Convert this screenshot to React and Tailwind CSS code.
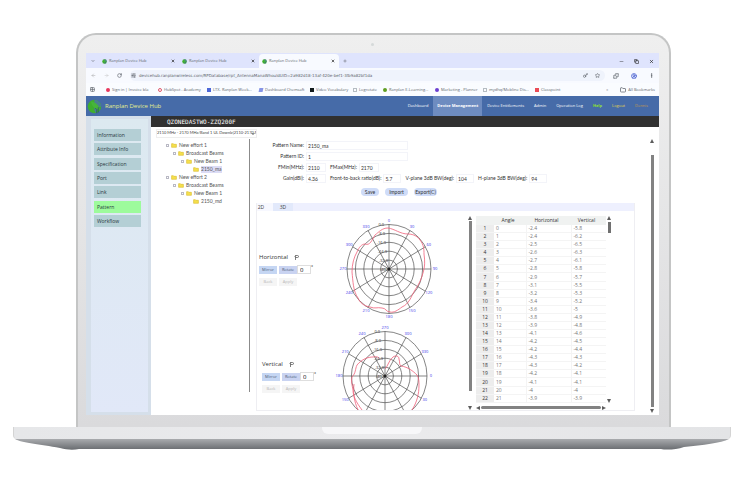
import React from 'react';
import {
    ArrowLeft, ArrowRight, ChevronDown, CircleUserRound, Copy, EllipsisVertical, Folder, Grid2X2,
    Key, Minus, Plus, Puzzle, RotateCw, SlidersHorizontal, Star, X,
} from 'lucide-react';

const tabs = [false, false, true];

const bookmarks = [
    { label: 'Sign in | Invoice bla', width: 'w-[52px]', icon: 'rounded-full border-[#e8365d] border-2' },
    { label: 'HubSpot - Academy', width: 'w-[49px]', icon: 'rounded-full border-[#e0566a] border' },
    { label: 'LTX- Ranplan Week...', width: 'w-[52px]', icon: 'bg-[#4d68d8]' },
    { label: 'Dashboard Chemsaft', width: 'w-[51px]', icon: 'bg-[#8795e6] -skew-x-12' },
    { label: 'Video Vocabulary', width: 'w-[43px]', icon: 'bg-[#111a1c]' },
    { label: 'Logrotate', width: 'w-[30px]', icon: 'border border-[#b5bcc2]' },
    { label: 'Ranplan E-Learning...', width: 'w-[52px]', icon: 'rounded-full bg-[#5f9e21]' },
    { label: 'Marketing - Planner', width: 'w-[48px]', icon: 'rounded-full bg-[#6b3fd0]' },
    { label: 'mydhq/Mobline Dis...', width: 'w-[52px]', icon: 'border border-[#b5bcc2]' },
    { label: 'Classpoint', width: 'w-[34px]', icon: 'bg-[#ea4b56]' },
];

const sections = ['Information', 'Attribute Info', 'Specification', 'Port', 'Link', 'Pattern', 'Workflow'];

const tree = [
    { label: 'New effort 1', indent: 'pl-[15px]' },
    { label: 'Broadcast Beams', indent: 'pl-[22px]' },
    { label: 'New Beam 1', indent: 'pl-[30px]' },
    { label: '2150_ma', indent: 'pl-[42px]', leaf: true, selected: true },
    { label: 'New effort 2', indent: 'pl-[15px]' },
    { label: 'Broadcast Beams', indent: 'pl-[22px]' },
    { label: 'New Beam 1', indent: 'pl-[30px]' },
    { label: '2150_md', indent: 'pl-[42px]', leaf: true },
];

const rows = [
    ['-2.4', '-5.8'], ['-2.4', '-6.2'], ['-2.5', '-6.5'], ['-2.6', '-6.3'], ['-2.7', '-6.1'], ['-2.8', '-5.8'],
    ['-2.9', '-5.7'], ['-3.1', '-5.5'], ['-3.2', '-5.3'], ['-3.4', '-5.2'], ['-3.6', '-5'], ['-3.8', '-4.9'],
    ['-3.9', '-4.8'], ['-4.1', '-4.6'], ['-4.2', '-4.5'], ['-4.2', '-4.4'], ['-4.3', '-4.3'], ['-4.3', '-4.2'],
    ['-4.2', '-4.1'], ['-4.1', '-4.1'], ['-4', '-4'], ['-3.9', '-3.9'],
];

const Favicon = ({ className }) => (
    <svg className={className} viewBox="0 0 20 20" aria-hidden="true">
        <circle cx="10" cy="10" r="9" fill="#3fae2e" />
        <path d="M10 1a9 9 0 0 1 9 9c-4 1-6 4-7 9C9 15 9 10 10 1z" fill="#4a7f90" />
        <path d="M5 3c6 1 11 5 12 11-3 1-7-1-9-4S6 6 5 3z" fill="#46b53a" />
        <path d="M11 12l2 2v5M15 11v7" stroke="#26506f" strokeWidth="1" fill="none" />
    </svg>
);

const Arrow = ({ className }) => (
    <svg className={className} width="4" height="4" viewBox="0 0 4 4" aria-hidden="true">
        <path d="M2 0L4 4H0z" fill="#5d5d5d" />
    </svg>
);

const BrowserChrome = () => (
    <div className="text-[4px] text-[#60656d]">
        {/* Tab strip */}
        <div className="flex h-[15px] items-end bg-[#dfe4fd]">
            <div className="flex h-[14px] w-[13px] items-center justify-center">
                <ChevronDown className="size-1" strokeWidth={4} />
            </div>
            {tabs.map((active, i) => (
                <div key={i} className={`flex h-[14px] w-20 items-center gap-px rounded-t pr-1 pl-[3px] ${active ? 'bg-[#f8faff]' : ''}`}>
                    <Favicon className="size-[5px]" />
                    <span className="flex-1 pl-px whitespace-nowrap">Ranplan Device Hub</span>
                    <button aria-label="Close tab"><X className="size-1 text-[#222]" strokeWidth={4} /></button>
                </div>
            ))}
            <button aria-label="New tab" className="flex h-[14px] w-[11px] items-center justify-center">
                <Plus className="size-1" strokeWidth={3} />
            </button>
            <div className="ml-auto flex h-[14px] items-center gap-[10px] pr-[5px] text-[#222]">
                <Minus className="size-[5px]" />
                <Copy className="size-[5px]" strokeWidth={3} />
                <X className="size-[5px]" strokeWidth={3} />
            </div>
        </div>

        {/* Address bar */}
        <div className="flex h-[15px] items-center gap-2 bg-[#f8faff] px-[5px]">
            <ArrowLeft className="size-[5px] text-[#999]" />
            <ArrowRight className="size-[5px] text-[#bbb]" />
            <RotateCw className="size-[5px]" strokeWidth={3} />
            <div className="flex h-[11px] flex-1 items-center gap-[3px] rounded-full bg-[#eff3fc] px-px">
                <SlidersHorizontal className="size-[5px]" strokeWidth={3} />
                <span className="flex-1 font-['DejaVu_Sans',sans-serif] whitespace-nowrap">
                    devicehub.ranplanwireless.com/RPDatabase/rpt_AntennaManaWhouldUID=2a982d18-13af-420e-bef1-3fb9a82bf1da
                </span>
                <Key className="mr-1 size-[5px]" strokeWidth={3} />
                <Star className="mr-1 size-[5px]" strokeWidth={3} />
            </div>
            <div className="flex items-center gap-3">
                <Puzzle className="size-[6px]" strokeWidth={3} />
                <CircleUserRound className="size-[6px] text-[#4c63d2]" strokeWidth={3} />
                <EllipsisVertical className="size-[5px]" strokeWidth={4} />
            </div>
        </div>

        {/* Bookmarks */}
        <div className="flex h-[13px] items-center bg-[#fafcff] pl-1">
            <Grid2X2 className="mr-[11px] size-[5px]" strokeWidth={3} />
            {bookmarks.map((b) => (
                <a key={b.label} href="#" className={`flex shrink-0 items-center gap-[2px] whitespace-nowrap ${b.width}`}>
                    <span className={`size-1 shrink-0 ${b.icon}`} />
                    {b.label}
                </a>
            ))}
            <span className="ml-auto pr-3">»</span>
            <a href="#" className="flex items-center gap-[2px] pr-1 whitespace-nowrap">
                <Folder className="size-[6px]" strokeWidth={3} />
                All Bookmarks
            </a>
        </div>
    </div>
);

const NavBar = () => (
    <nav className="flex h-5 items-stretch bg-[#466ba8] text-[4px] text-white">
        <div className="flex items-center gap-[3px] pl-px text-[6px] text-[#e3ef8c]">
            <Favicon className="size-[15px]" />
            <span className="whitespace-nowrap">Ranplan Device Hub</span>
        </div>
        <div className="ml-auto flex items-stretch pr-[11px] *:flex *:items-center *:whitespace-nowrap">
            <a href="#" className="px-[5px]">Dashboard</a>
            <a href="#" className="bg-[#6e8cc0] px-1 font-bold">Device Management</a>
            <a href="#" className="px-[5px]">Device Entitlements</a>
            <a href="#" className="px-[5px]">Admin</a>
            <a href="#" className="px-[5px]">Operation Log</a>
            <a href="#" className="px-[5px] font-bold text-[#8fe02f]">Help</a>
            <a href="#" className="px-[5px] text-[#e2d84a]">Logout</a>
            <a href="#" className="pl-[5px] text-[#c59a4a]">Dennis</a>
        </div>
    </nav>
);

const Tree = () => (
    <ul className="h-[253px] w-[99px] shrink-0 border-r border-[#8b8b8b] pt-[2px] font-['Lato',sans-serif] text-[5px] text-[#555]">
        {tree.map((node, i) => (
            <li key={i} className={`flex h-2 items-center gap-[2px] whitespace-nowrap ${node.indent}`}>
                {!node.leaf && <span className="size-[3px] border border-[#b9b9c4]" />}
                <svg className="h-[5px] w-[6px] shrink-0" viewBox="0 0 10 8" aria-hidden="true">
                    <path d="M1 1h3l1 1h4v5H1z" fill="#f5e04c" stroke="#d8bb2a" />
                </svg>
                <span className={node.selected ? 'bg-[#dcdcf5] leading-[7px]' : 'leading-[7px]'}>{node.label}</span>
            </li>
        ))}
    </ul>
);

const Field = ({ id, label, value, labelWidth = '', width }) => (
    <div className="flex items-center gap-[2px]">
        <label htmlFor={id} className={`text-right whitespace-nowrap ${labelWidth}`}>{label}</label>
        <input id={id} defaultValue={value} className={`h-[9px] border border-[#f3f4f9] px-px leading-[7px] ${width}`} />
    </div>
);

const PatternForm = () => (
    <div className="flex h-[64px] flex-col gap-[2px] pt-[2px] font-['Lato',sans-serif] text-[5px] text-[#333]">
        <Field id="name" label="Pattern Name:" value="2150_ma" labelWidth="w-[54px]" width="w-[102px]" />
        <Field id="pid" label="Pattern ID:" value="1" labelWidth="w-[54px]" width="w-[102px]" />
        <div className="flex gap-1">
            <Field id="fmin" label="FMin(MHz):" value="2110" labelWidth="w-[54px]" width="w-5" />
            <Field id="fmax" label="FMax(MHz):" value="2170" width="w-5" />
        </div>
        <div className="flex gap-1">
            <Field id="gain" label="Gain(dBi):" value="4.36" labelWidth="w-[54px]" width="w-5" />
            <Field id="ftb" label="Front-to-back ratio(dB):" value="5.7" width="w-[18px]" />
            <Field id="vplane" label="V-plane 3dB BW(deg):" value="104" width="w-[18px]" />
            <Field id="hplane" label="H-plane 3dB BW(deg):" value="94" width="w-[18px]" />
        </div>
        <div className="flex gap-[6px] pt-[3px] pl-[111px] *:h-2 *:rounded-sm *:bg-[#cfdcf8] *:leading-[8px]">
            <button className="w-[18px]">Save</button>
            <button className="w-[23px]">Import</button>
            <button className="w-[23px]">Export(C)</button>
        </div>
    </div>
);

// Polar grid: five rings and twelve spokes, stretched a little taller than wide
const PolarChart = ({ cx, cy, height, labels, curves, name }) => {
    const spokes = Array.from({ length: 6 }, (_, i) => (i * Math.PI) / 6);
    const marks = labels
        .map((text, i) => ({
            text,
            x: cx + Math.sin((i * Math.PI) / 6) * 46,
            y: cy - Math.cos((i * Math.PI) / 6) * 48 + 1,
        }))
        .filter((m) => m.y < height);
    return (
        <svg width="106" height={height} viewBox={`0 0 106 ${height}`} fill="none" role="img" aria-label={name}>
            {[1, 2, 3, 4, 5].map((n) => (
                <ellipse key={n} cx={cx} cy={cy} rx={n * 8.4} ry={n * 8.9} stroke="#505050" strokeWidth="0.7" />
            ))}
            {spokes.map((a) => (
                <line
                    key={a}
                    x1={cx - Math.sin(a) * 42} y1={cy - Math.cos(a) * 44.5}
                    x2={cx + Math.sin(a) * 42} y2={cy + Math.cos(a) * 44.5}
                    stroke="#505050" strokeWidth="0.7"
                />
            ))}
            {curves.map((d) => <path key={d} d={d} stroke="#f0617a" strokeWidth="0.8" />)}
            <circle cx={cx} cy={cy} r="1.5" fill="#222" />
            <g fontSize="4" fill="#333" textAnchor="end">
                {['0.0', '-8.0', '-16.0', '-24.0', '-32.0', '-40.0'].map((t, i) => (
                    <text key={t} x={cx - 5 + i} y={cy - 43 + i * 9}>{t}</text>
                ))}
            </g>
            <g fontSize="4" fill="#3a35e8" textAnchor="middle">
                {marks.map((m) => <text key={m.text} x={m.x} y={m.y}>{m.text}</text>)}
            </g>
        </svg>
    );
};

const PlaneControls = ({ title, offset }) => (
    <div className={`w-[77px] shrink-0 pt-[37px] ${offset}`}>
        <div className="flex h-2 items-center gap-[6px] text-[6px] text-[#333]">
            {title}
            <svg className="size-[5px]" viewBox="0 0 10 10" fill="none" stroke="#555" aria-hidden="true">
                <path d="M3 10V1M3 1h4a2 2 0 0 1 0 4H3M1 3l2-2" strokeWidth="1.5" />
            </svg>
        </div>
        <div className="mt-1 flex items-center text-[4px]">
            <button className="h-2 w-[18px] bg-[#c5d6f3] text-[#4c5a75]">Mirror</button>
            <button className="ml-[2px] h-2 w-[18px] bg-[#c9d3f1] text-[#4c5a75]">Rotate</button>
            <input aria-label={`${title} rotation`} defaultValue="0" className="h-[9px] w-[14px] border border-[#dedede] bg-white px-[2px] text-[6px] leading-[7px]" />
            <span className="self-start text-[5px] leading-[5px]">°</span>
        </div>
        <div className="mt-1 flex gap-[2px] text-[4px] text-[#b6b6b6] *:h-2 *:w-[18px] *:bg-[#f5f5f5]">
            <button disabled>Back</button>
            <button disabled>Apply</button>
        </div>
    </div>
);

const horizontalCurve =
    'M54 12C61 13 66 18 74 18C80 18 84 21 86 24C90 29 90 34 90 38C91 45 91 51 89 57C87 64 85 68 81 74C77 81 75 88 68 91C64 94 60 97 56 96C52 96 52 92 48 92C43 91 41 93 36 91C30 90 26 87 24 82C19 75 19 65 18 56C18 48 20 41 23 36C25 31 28 28 31 28C36 30 38 24 41 19C45 16 48 12 54 12Z';
const verticalCurves = [
    'M28 87C22 79 19 73 19 67C18 62 17 58 18 54C22 50 21 46 23 42C28 36 34 34 39 34C44 33 45 35 46 36',
    'M51 46C54 43 55 37 59 34C62 32 65 33 65 36C66 39 65 42 67 43C74 44 79 48 83 52C85 55 85 59 85 62C85 71 83 79 78 87',
    'M24 87C20 78 19 70 20 61',
];

const DataTable = () => (
    <div className="flex">
        <div>
            <table className="h-[187px] w-[130px] table-fixed border-collapse text-[5px] leading-[7px] text-[#777]">
                <thead className="bg-[#f0f2f1] text-[#333]">
                    <tr className="h-[9px] *:p-0 *:pr-1 *:font-normal">
                        <th className="w-[18px]" />
                        <th className="w-8">Angle</th>
                        <th className="w-[45px]">Horizontal</th>
                        <th>Vertical</th>
                    </tr>
                </thead>
                <tbody>
                    {rows.map(([h, v], i) => (
                        <tr key={i} className="*:border-b *:border-[#f4f4f4] *:px-[2px] *:py-0">
                            <th className="bg-[#ededed] font-normal text-[#333]">{i + 1}</th>
                            <td>{i}</td>
                            <td className="border-l">{h}</td>
                            <td className="border-l">{v}</td>
                        </tr>
                    ))}
                </tbody>
            </table>
            <div className="flex h-[7px] items-center justify-between gap-px pt-[2px]">
                <Arrow className="-rotate-90" />
                <div className="h-[3px] flex-1 rounded-full bg-[#828282]" />
                <Arrow className="rotate-90" />
            </div>
        </div>
        <div className="flex h-[187px] w-[6px] flex-col items-center gap-[2px]">
            <Arrow />
            <div className="h-[11px] w-[3px] bg-[#707070]" />
            <Arrow className="mt-auto rotate-180" />
        </div>
    </div>
);

const PatternPanel = () => (
    <div className="mr-[15px] ml-[6px] border border-t-0 border-[#eeeef2]">
        <div className="flex h-2 bg-[#eef0fe] text-[5px] leading-[8px] text-[#444]">
            <button className="w-4 bg-white/50 pr-2">2D</button>
            <button className="w-5 bg-[#e2e9fb]">3D</button>
        </div>
        <div className="flex pt-[5px]">
            <div>
                <div className="flex">
                    <PlaneControls title="Horizontal" offset="pl-[2px]" />
                    <PolarChart
                        name="Horizontal pattern" cx={55} cy={53} height={107}
                        labels={['0', '30', '60', '90', '120', '150', '180', '210', '240', '270', '300', '330']}
                        curves={[horizontalCurve]}
                    />
                </div>
                <div className="flex">
                    <PlaneControls title="Vertical" offset="pl-[5px]" />
                    <PolarChart
                        name="Vertical pattern" cx={51} cy={53} height={87}
                        labels={['270', '300', '330', '0', '30', '60', '90', '120', '150', '180', '210', '240']}
                        curves={verticalCurves}
                    />
                </div>
            </div>
            <div className="ml-auto flex w-[14px] flex-col items-center gap-px pl-1">
                <Arrow />
                <div className="w-[3px] flex-1 bg-[#828282]" />
                <Arrow className="mt-[14px] rotate-180" />
            </div>
            <div className="mr-[22px] pl-px">
                <DataTable />
            </div>
        </div>
    </div>
);

const Screen = () => (
    <div className="overflow-hidden bg-white">
        <BrowserChrome />
        <NavBar />
        <div className="flex">
            {/* Section menu */}
            <aside className="w-[65px] shrink-0 bg-[#d5dfea] p-[3px] pl-[5px]">
                <div className="flex h-full flex-col bg-linear-to-b from-[#dce9f0] to-[#e1e8f8] pt-[10px] pr-[7px] pl-[3px]">
                    <div className="flex h-[98px] flex-col justify-between">
                        {sections.map((s) => (
                            <button
                                key={s}
                                className={`h-3 pl-[3px] text-left text-[5px] leading-[12px] whitespace-nowrap text-[#27363b] ${s === 'Pattern' ? 'bg-[#9dfb9c]' : 'bg-[#b4cfd5]'}`}
                            >
                                {s}
                            </button>
                        ))}
                    </div>
                </div>
            </aside>

            <main className="min-w-0 flex-1">
                <h1 className="h-[11px] bg-[#303030] pl-4 font-['DejaVu_Sans_Mono',monospace] text-[6px] leading-[11px] text-white">
                    QZONEDASTWO-ZZQ200F
                </h1>
                <div className="flex h-3 items-center pl-[5px]">
                    <div className="relative">
                        <select aria-label="Band" className="block h-[9px] w-[101px] appearance-none border border-[#eee] bg-white font-['Lato',sans-serif] text-[4px] text-[#444]">
                            <option>2110 MHz - 2170 MHz/Band 1 UL Downlz(2110-2170 MHz)</option>
                        </select>
                        <ChevronDown className="pointer-events-none absolute top-[3px] right-[2px] size-1" strokeWidth={4} />
                    </div>
                </div>
                <div className="flex">
                    <Tree />
                    <div className="min-w-0 flex-1 pb-1">
                        <PatternForm />
                        <PatternPanel />
                    </div>
                    <div className="flex w-1 shrink-0 flex-col items-center gap-[2px] pb-[2px]">
                        <Arrow />
                        <div className="mt-[10px] w-[3px] flex-1 bg-[#828282]" />
                        <Arrow className="rotate-180" />
                    </div>
                    <div className="w-[5px] shrink-0" />
                </div>
            </main>
        </div>
    </div>
);

const App = () => {
    return (
        <div className="min-h-screen overflow-hidden bg-white px-[13px] pt-[33px] font-['Open_Sans',sans-serif]">
            {/* Lid */}
            <div className="mr-[60px] ml-[63px] rounded-t-[20px] border-2 border-b-0 border-[#c4c5c5] bg-linear-to-b from-[#efefef] to-[#dadadc] pr-[10px] pb-3 pl-2">
                <div className="flex h-[18px] items-center justify-center">
                    <span className="size-[3px] rounded-full bg-[#d5d9d9]" />
                </div>
                <Screen />
            </div>

            {/* Base */}
            <div className="h-3 rounded-b-sm border-x border-[#d4d4d4] bg-linear-to-r from-[#e6e7e9] via-[#ebebed] to-[#e3e4e6]">
                <div className="mx-auto h-[7px] w-[100px] rounded-b-md bg-[#f7f7f9]" />
            </div>
            <svg className="block h-[11px] w-full" viewBox="0 0 718 11" preserveAspectRatio="none" aria-hidden="true">
                <defs>
                    <linearGradient id="foot" x1="0" y1="0" x2="0" y2="1">
                        <stop offset="0" stopColor="#a9abae" />
                        <stop offset="1" stopColor="#696c70" />
                    </linearGradient>
                </defs>
                <path d="M2 0H716C708 4 690 6 671 8C663 11 652 11 648 10H66C61 11 54 11 47 9C27 5 8 4 2 0z" fill="url(#foot)" />
            </svg>
        </div>
    );
};

export default App;
